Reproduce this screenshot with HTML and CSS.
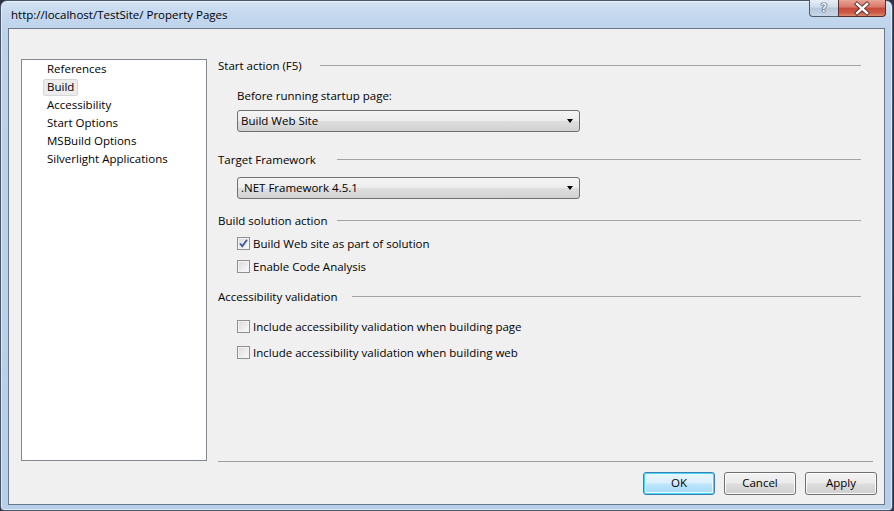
FILE: index.html
```html
<!DOCTYPE html>
<html>
<head>
<meta charset="utf-8">
<link rel="stylesheet" href="styles.css">
</head>
<body>
<div class="window">
  <div class="titlebar">
    <span class="title">http://localhost/TestSite/ Property Pages</span>
    <div class="caption">
      <div class="cbtn help">?</div>
      <div class="cbtn close">
        <svg width="46" height="17" viewBox="0 0 46 17">
          <path d="M18 4 L28 13 M28 4 L18 13" stroke="#5a2a22" stroke-width="4.2" stroke-linecap="square"/>
          <path d="M18 4 L28 13 M28 4 L18 13" stroke="#ffffff" stroke-width="2.4" stroke-linecap="square"/>
        </svg>
      </div>
    </div>
  </div>
  <div class="client">
    <ul class="listbox">
      <li><span>References</span></li>
      <li><span class="sel">Build</span></li>
      <li><span>Accessibility</span></li>
      <li><span>Start Options</span></li>
      <li><span>MSBuild Options</span></li>
      <li><span>Silverlight Applications</span></li>
    </ul>
    <div class="panel">
      <div class="hdr hdr-start"><span class="hlabel">Start action (F5)</span><span class="rule"></span></div>
      <div class="label">Before running startup page:</div>
      <div class="combo combo-1"><span>Build Web Site</span><span class="arrow"></span></div>
      <div class="hdr hdr-target"><span class="hlabel">Target Framework</span><span class="rule"></span></div>
      <div class="combo combo-2"><span>.NET Framework 4.5.1</span><span class="arrow"></span></div>
      <div class="hdr hdr-build"><span class="hlabel">Build solution action</span><span class="rule"></span></div>
      <div class="check cb-1"><span class="box checked"><svg width="11" height="11" viewBox="0 0 11 11"><path d="M2 5.5 L4.3 8.2 L9 1.8" fill="none" stroke="#3c5a9a" stroke-width="1.9"/></svg></span><span>Build Web site as part of solution</span></div>
      <div class="check cb-2"><span class="box"></span><span>Enable Code Analysis</span></div>
      <div class="hdr hdr-access"><span class="hlabel">Accessibility validation</span><span class="rule"></span></div>
      <div class="check cb-3"><span class="box"></span><span>Include accessibility validation when building page</span></div>
      <div class="check cb-4"><span class="box"></span><span>Include accessibility validation when building web</span></div>
    </div>
    <div class="sep"></div>
    <div class="buttons">
      <button class="btn default">OK</button>
      <button class="btn">Cancel</button>
      <button class="btn">Apply</button>
    </div>
  </div>
</div>
</body>
</html>
```
FILE: styles.css
```css
html, body {
  margin: 0;
  padding: 0;
}
body {
  width: 894px;
  height: 511px;
  background: #2e3144;
  font-family: "Open Sans", "Noto Sans", sans-serif;
  font-size: 11.5px;
  color: #000;
  overflow: hidden;
}
.window {
  box-sizing: border-box;
  width: 893px;
  height: 511px;
  border: 1px solid #4b5568;
  border-radius: 7px 7px 4px 4px;
  background: linear-gradient(180deg, #d3e2f3 0px, #c3d7ed 14px, #bcd2ea 40px, #b8cfe9 100%);
  box-shadow: inset 0 0 0 1px rgba(255,255,255,0.55);
  padding: 0 0 5px 0;
  display: flex;
  flex-direction: column;
}
.titlebar {
  height: 27px;
  display: flex;
  align-items: center;
  justify-content: space-between;
}
.title {
  padding-left: 10px;
  padding-bottom: 1px;
  font-size: 11.5px;
}
.caption {
  display: flex;
  align-self: flex-start;
  margin-top: -1px;
  margin-right: 6px;
}
.cbtn {
  height: 17px;
  box-sizing: border-box;
  border: 1px solid #4c5a6e;
  border-top: none;
  display: flex;
  align-items: center;
  justify-content: center;
}
.help {
  width: 29px;
  border-radius: 0 0 0 4px;
  background: linear-gradient(180deg, #e6eef7 0%, #cfdbea 45%, #b7c7db 50%, #c6d5e6 100%);
  color: #e9eef5;
  font-family: "DejaVu Sans", sans-serif;
  font-weight: bold;
  font-size: 12px;
  text-shadow: 0 0 1px #2a3a55, 0 0 1px #2a3a55, 0 0 1px #2a3a55;
  border-right: none;
}
.close {
  width: 48px;
  border-radius: 0 0 4px 0;
  background: linear-gradient(180deg, #e8a493 0%, #d8766a 45%, #c44a3a 50%, #cd5b48 80%, #dc8a6e 100%);
  border-color: #5a2d2a;
}
.client {
  flex: 1;
  margin: 0 7px;
  border: 1px solid #68778a;
  background: #f0f0f0;
  display: grid;
  grid-template-columns: 186px 1fr;
  grid-template-rows: 402px 1px auto;
  column-gap: 11px;
  padding: 30px 7px 0 12px;
}
.listbox {
  grid-column: 1;
  grid-row: 1;
  margin: 0;
  padding: 0;
  list-style: none;
  background: #fff;
  border: 1px solid #828790;
}
.listbox li {
  height: 18px;
  display: flex;
  align-items: center;
}
.listbox li span {
  margin-left: 21px;
  padding: 0 3px 1px 3px;
  height: 14px;
  line-height: 14px;
  border: 1px solid transparent;
  border-radius: 2px;
}
.listbox li span.sel {
  background: #ececec;
  border-color: #d6d6d6;
}
.panel {
  grid-column: 2;
  grid-row: 1;
  margin-top: -2px;
  display: flex;
  flex-direction: column;
}
.hdr {
  height: 16px;
  display: flex;
  align-items: center;
  padding-right: 16px;
}
.hlabel {
  white-space: nowrap;
}
.hdr-start .hlabel { width: 102px; }
.hdr-target .hlabel { width: 119px; }
.hdr-build .hlabel { width: 119px; }
.hdr-access .hlabel { width: 134px; }
.rule {
  flex: 1;
  height: 1px;
  background: #a3a3a3;
}
.hdr-target { margin-top: 19px; }
.hdr-build { margin-top: 13px; }
.hdr-access { margin-top: 14px; }
.label {
  margin: 15px 0 0 19px;
  height: 16px;
  line-height: 16px;
}
.combo {
  margin-left: 19px;
  width: 343px;
  height: 22px;
  box-sizing: border-box;
  border: 1px solid #707070;
  border-radius: 3px;
  background: linear-gradient(180deg, #f4f4f4 0%, #ececec 48%, #dedede 52%, #d2d2d2 100%);
  display: flex;
  align-items: center;
  justify-content: space-between;
  padding: 0 6px 1px 3px;
}
.combo-1 { margin-top: 6px; }
.combo-2 { margin-top: 10px; }
.arrow {
  width: 0;
  height: 0;
  border-left: 3.5px solid transparent;
  border-right: 3.5px solid transparent;
  border-top: 4px solid #000;
  margin-top: 1px;
}
.check {
  margin-left: 19px;
  height: 16px;
  display: flex;
  align-items: center;
  gap: 3px;
}
.cb-1 { margin-top: 7px; }
.cb-2 { margin-top: 7px; }
.cb-3 { margin-top: 14px; }
.cb-4 { margin-top: 10px; }
.box {
  width: 13px;
  height: 13px;
  box-sizing: border-box;
  border: 1px solid #8e8f8f;
  background: linear-gradient(135deg, #d8d8d8 0%, #ededed 55%, #fafafa 100%);
  box-shadow: inset 0 0 0 1px #f4f4f4;
  display: flex;
  align-items: center;
  justify-content: center;
}
.box.checked svg {
  display: block;
}
.sep {
  grid-column: 2;
  grid-row: 2;
  margin-right: 4px;
  background: #a0a0a0;
}
.buttons {
  grid-column: 2;
  grid-row: 3;
  margin-top: 10px;
  display: flex;
  justify-content: flex-end;
  gap: 9px;
}
.btn {
  width: 72px;
  height: 23px;
  box-sizing: border-box;
  border: 1px solid #707070;
  border-radius: 3px;
  background: linear-gradient(180deg, #f2f2f2 0%, #ebebeb 48%, #dddddd 52%, #cfcfcf 100%);
  box-shadow: inset 0 0 0 1px #fcfcfc;
  font-family: "Open Sans", "Noto Sans", sans-serif;
  font-size: 11.5px;
  color: #000;
  padding: 0 0 2px 0;
}
.btn.default {
  border-color: #3c7fb1;
  box-shadow: inset 0 0 0 1px #48d7fb, inset 0 0 0 2px #e8f6fd;
  background: linear-gradient(180deg, #eaf6fd 0%, #d9f0fc 48%, #bee6fd 52%, #a7d9f5 100%);
}
```
